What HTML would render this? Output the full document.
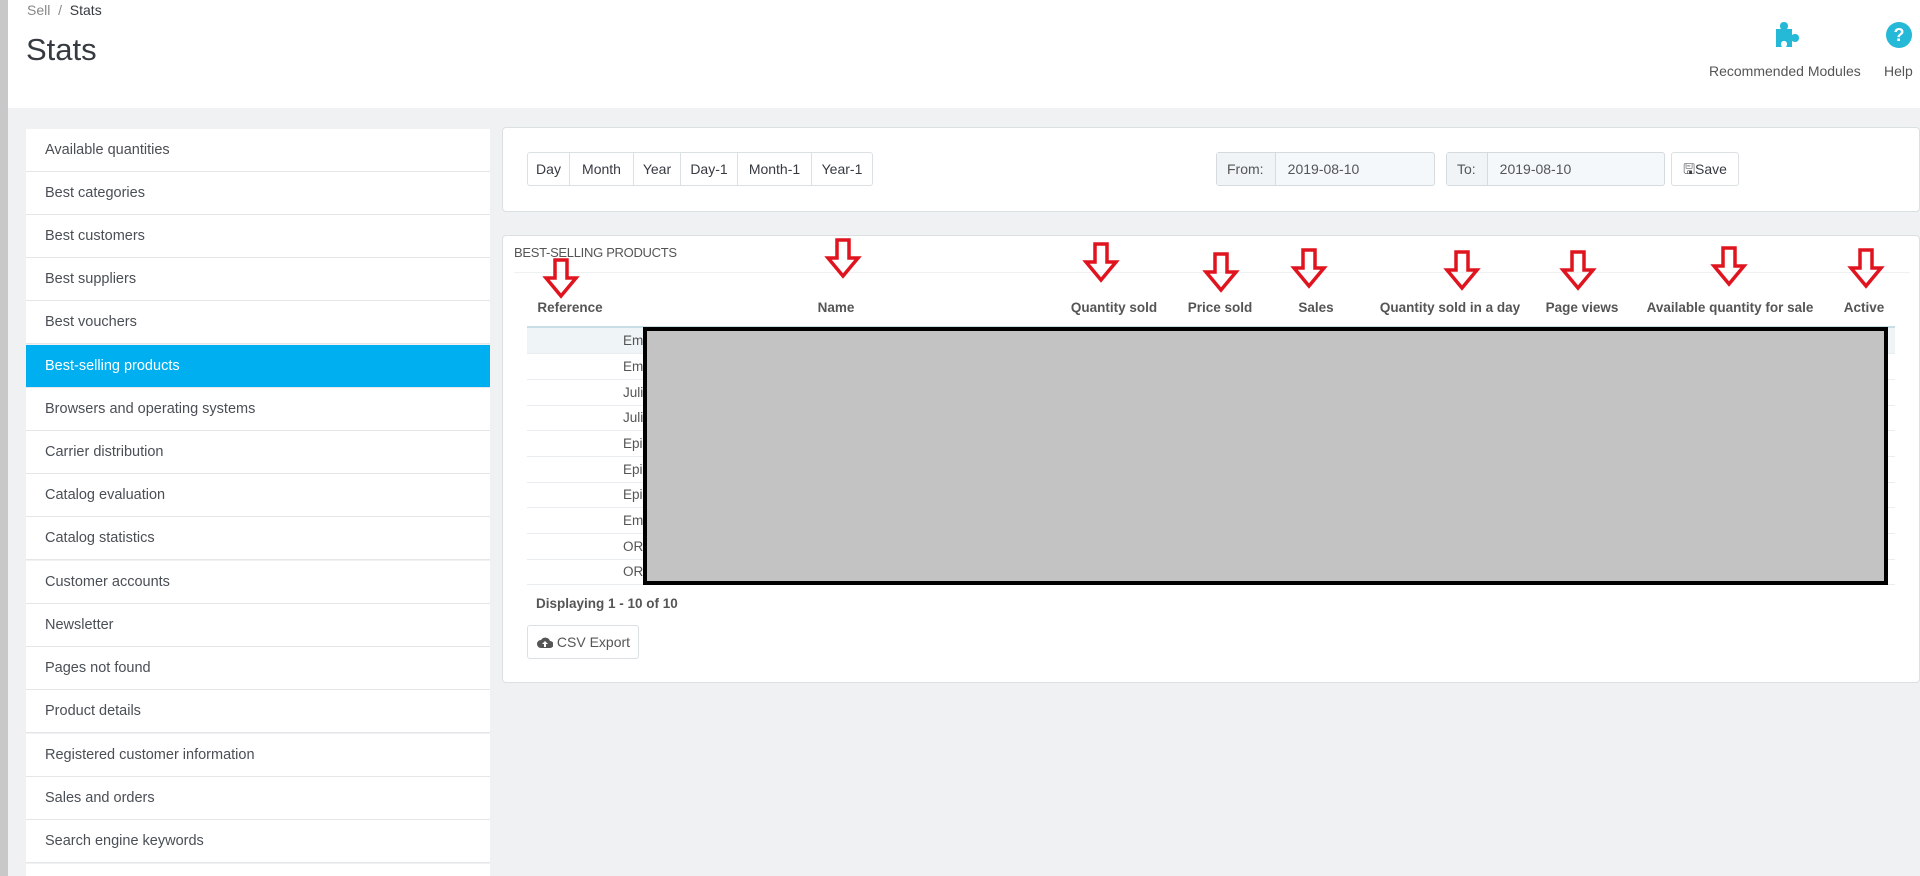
<!DOCTYPE html>
<html><head><meta charset="utf-8"><style>
*{box-sizing:border-box;margin:0;padding:0}
html{width:1920px;height:876px;overflow:hidden}
body{width:1920px;height:876px;overflow:hidden;background:#eff1f2;font-family:"Liberation Sans",sans-serif;color:#363a41;position:relative}
.a{position:absolute}
#hdr{left:0;top:0;width:1920px;height:108px;background:#fff}
#sb{left:0;top:0;width:8px;height:876px;background:#c8c8c8}
.item{position:absolute;left:26px;width:464px;height:43px;background:#fff;border-bottom:1px solid #e4e6e8;font-size:14.5px;color:#4a4f55;padding-left:19px;line-height:43px}
.item.act{background:#00aff0;color:#fff}
.panel{background:#fff;border:1px solid #dbe0e3;border-radius:4px}
.btn{position:absolute;top:152px;height:34px;border:1px solid #dbe0e3;background:#fff;font-size:14px;line-height:32px;text-align:center;color:#363a41}
.inp{position:absolute;top:152px;height:34px;border:1px solid #d4dadd;background:#f4f8fb;border-radius:3px;font-size:14px;line-height:32px;color:#555}
.inp span{display:inline-block;height:32px;border-right:1px solid #d4dadd;padding:0 10px;background:#f0f4f6}
.th{position:absolute;top:300px;font-size:13.5px;font-weight:bold;color:#555;white-space:nowrap;transform:translateX(-50%)}
.row{position:absolute;left:527px;width:1368px;height:26px;border-bottom:1px solid #eaedef;font-size:13.5px;color:#555;line-height:25px}
.row b{font-weight:normal;position:absolute;left:96px}
</style></head><body>
<div id="hdr" class="a"></div>
<div id="sb" class="a"></div>
<div class="a" style="left:27px;top:2px;font-size:14px;color:#888">Sell &nbsp;/&nbsp; <span style="color:#363a41">Stats</span></div>
<div class="a" style="left:26px;top:32px;font-size:31px;color:#363a41">Stats</div>
<svg class="a" style="left:1772px;top:20px" width="28" height="28" viewBox="0 0 28 28"><path d="M4 9h5c-2-3-1-7 3-7s5 4 3 7h5v6c3-2 7-1 7 3s-4 5-7 3v6h-6c2-3 1-6-2-6s-4 3-2 6H4z" fill="#25b9d7"/></svg>
<div class="a" style="left:1709px;top:63px;font-size:14px;color:#555">Recommended Modules</div>
<svg class="a" style="left:1885px;top:21px" width="28" height="28"><circle cx="14" cy="14" r="13" fill="#25b9d7"/><text x="14" y="20" text-anchor="middle" font-family="Liberation Sans" font-weight="bold" font-size="18" fill="#fff">?</text></svg>
<div class="a" style="left:1884px;top:63px;font-size:14px;color:#555">Help</div>

<div class="item" style="top:129px">Available quantities</div>
<div class="item" style="top:172px">Best categories</div>
<div class="item" style="top:215px">Best customers</div>
<div class="item" style="top:258px">Best suppliers</div>
<div class="item" style="top:301px">Best vouchers</div>
<div class="item act" style="top:345px">Best-selling products</div>
<div class="item" style="top:388px">Browsers and operating systems</div>
<div class="item" style="top:431px">Carrier distribution</div>
<div class="item" style="top:474px">Catalog evaluation</div>
<div class="item" style="top:517px">Catalog statistics</div>
<div class="item" style="top:561px">Customer accounts</div>
<div class="item" style="top:604px">Newsletter</div>
<div class="item" style="top:647px">Pages not found</div>
<div class="item" style="top:690px">Product details</div>
<div class="item" style="top:734px">Registered customer information</div>
<div class="item" style="top:777px">Sales and orders</div>
<div class="item" style="top:820px">Search engine keywords</div>
<div class="item" style="top:864px;height:12px;border:0"></div>

<div class="panel a" style="left:502px;top:127px;width:1418px;height:85px"></div>
<div class="btn" style="left:527px;width:43px;border-radius:3px 0 0 3px">Day</div>
<div class="btn" style="left:569px;width:65px">Month</div>
<div class="btn" style="left:633px;width:48px">Year</div>
<div class="btn" style="left:680px;width:58px">Day-1</div>
<div class="btn" style="left:737px;width:75px">Month-1</div>
<div class="btn" style="left:811px;width:62px;border-radius:0 3px 3px 0">Year-1</div>
<div class="inp" style="left:1216px;width:219px"><span style="width:59px">From:</span>&nbsp;&nbsp; 2019-08-10</div>
<div class="inp" style="left:1446px;width:219px"><span style="width:41px">To:</span>&nbsp;&nbsp; 2019-08-10</div>
<div class="btn" style="left:1671px;width:68px;border-radius:3px">&#128427;Save</div>

<div class="panel a" style="left:502px;top:235px;width:1418px;height:448px"></div>
<div class="a" style="left:514px;top:245px;font-size:13px;color:#555;letter-spacing:-0.3px">BEST-SELLING PRODUCTS</div>
<div class="a" style="left:514px;top:272px;width:1396px;height:1px;background:#eef0f1"></div>
<div class="th" style="left:570px">Reference</div>
<div class="th" style="left:836px">Name</div>
<div class="th" style="left:1114px">Quantity sold</div>
<div class="th" style="left:1220px">Price sold</div>
<div class="th" style="left:1316px">Sales</div>
<div class="th" style="left:1450px">Quantity sold in a day</div>
<div class="th" style="left:1582px">Page views</div>
<div class="th" style="left:1730px">Available quantity for sale</div>
<div class="th" style="left:1864px">Active</div>
<div class="a" style="left:527px;top:326px;width:1368px;height:2px;background:#c9dde6"></div>
<div class="row" style="top:328px;background:#eff4f7"><b>Em</b></div>
<div class="row" style="top:354px"><b>Em</b></div>
<div class="row" style="top:380px"><b>Juli</b></div>
<div class="row" style="top:405px"><b>Juli</b></div>
<div class="row" style="top:431px"><b>Epi</b></div>
<div class="row" style="top:457px"><b>Epi</b></div>
<div class="row" style="top:482px"><b>Epi</b></div>
<div class="row" style="top:508px"><b>Em</b></div>
<div class="row" style="top:534px"><b>OR</b></div>
<div class="row" style="top:559px"><b>OR</b></div>
<div class="a" style="left:643px;top:327px;width:1245px;height:258px;background:#c3c3c3;border:4px solid #000"></div>
<div class="a" style="left:536px;top:596px;font-size:13.5px;font-weight:bold;color:#555">Displaying 1 - 10 of 10</div>
<div class="a" style="left:527px;top:625px;width:112px;height:34px;border:1px solid #dbe0e3;border-radius:3px;font-size:14px;line-height:32px;color:#555;padding-left:9px"><svg width="16" height="12" style="vertical-align:-1px"><path d="M4 12a4 4 0 0 1 0-8a5 5 0 0 1 9 1a3.5 3.5 0 0 1 0 7z" fill="#555"/><path d="M8 5l-3 3h2v3h2V8h2z" fill="#fff"/></svg> CSV Export</div>

<svg class="a" style="left:0;top:0" width="1920" height="876">
<defs><path id="ar" d="M-6 -20h12v18h9l-15 18l-15 -18h9z" fill="none" stroke="#e0141e" stroke-width="3.5" stroke-linejoin="miter"/></defs>
<use href="#ar" x="561" y="280"/>
<use href="#ar" x="843" y="260"/>
<use href="#ar" x="1101" y="264"/>
<use href="#ar" x="1221" y="274"/>
<use href="#ar" x="1309" y="270"/>
<use href="#ar" x="1462" y="272"/>
<use href="#ar" x="1578" y="272"/>
<use href="#ar" x="1729" y="268"/>
<use href="#ar" x="1866" y="270"/>
</svg>
</body></html>
